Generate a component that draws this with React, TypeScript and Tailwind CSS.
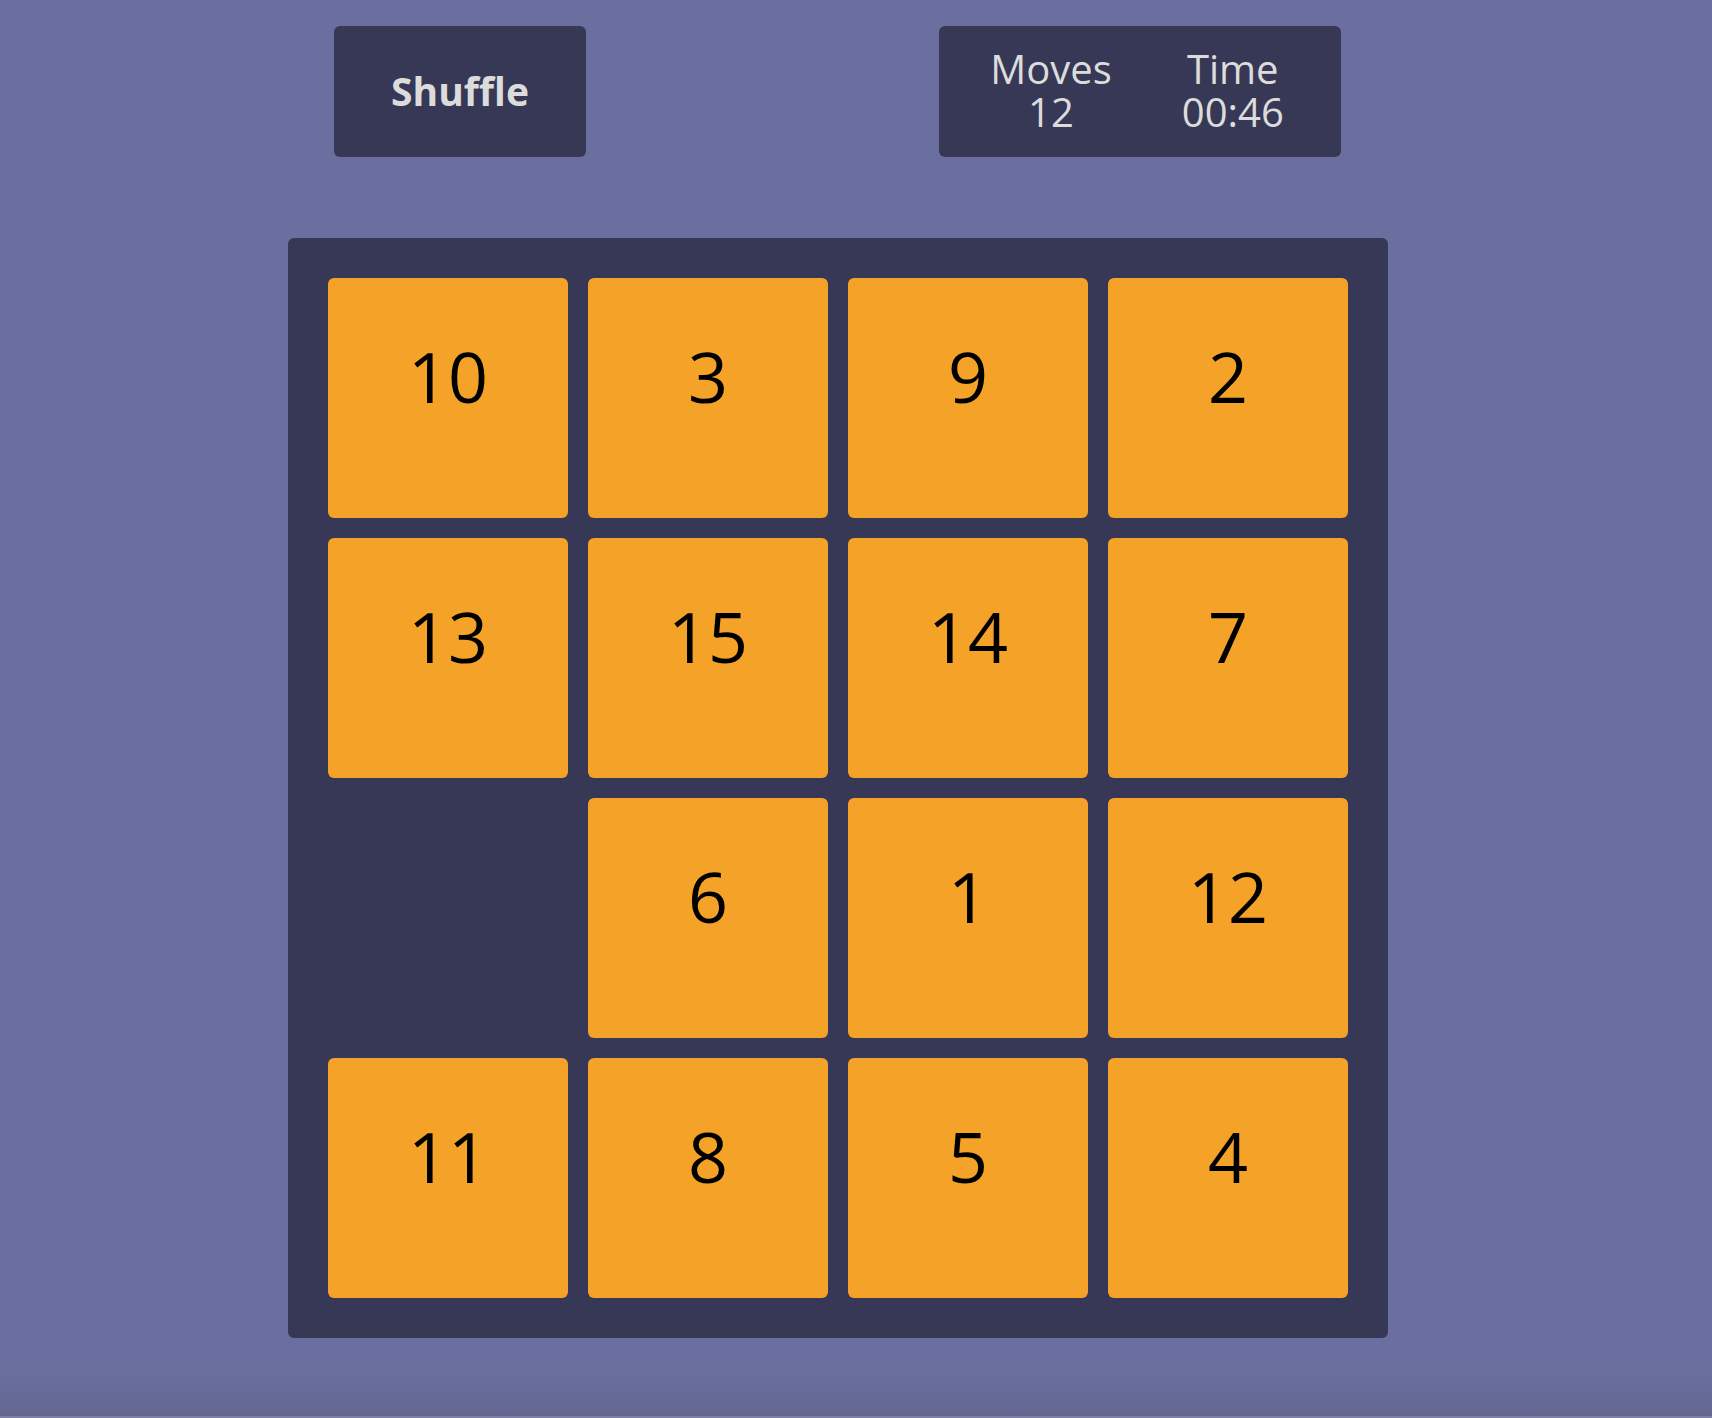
import React from "react";

const tiles: (number | null)[] = [10, 3, 9, 2, 13, 15, 14, 7, null, 6, 1, 12, 11, 8, 5, 4];

export default function App() {
  return (
    <div
      className="flex h-[1418px] w-full flex-col bg-[#6b6f9f] text-[#dcdcdc]"
      style={{ fontFamily: '"Open Sans", "DejaVu Sans", sans-serif' }}
    >
      <div className="ml-[288px] flex w-[1100px] flex-col pt-[26px]">
        <div className="flex items-start justify-between pl-[46px] pr-[47px]">
          <div className="flex h-[131px] w-[252px] cursor-pointer items-center justify-center rounded-[6px] bg-[#373856] pb-[2px] text-[39px] font-bold leading-[43px] text-[#dcdcdc]">
            Shuffle
          </div>
          <div className="flex h-[131px] w-[402px] justify-center gap-[70px] rounded-[6px] bg-[#373856] pr-[6px] pt-[21px] text-[40px] leading-[43px]">
            <div className="flex flex-col items-center">
              <span>Moves</span>
              <span>12</span>
            </div>
            <div className="flex flex-col items-center">
              <span>Time</span>
              <span>00:46</span>
            </div>
          </div>
        </div>
        <div className="mt-[81px] grid grid-cols-4 gap-[20px] rounded-[6px] bg-[#373856] p-[40px]">
          {tiles.map((t, i) =>
            t === null ? (
              <div key={i} className="h-[240px] w-[240px]" />
            ) : (
              <div
                key={i}
                className="flex h-[240px] w-[240px] justify-center rounded-[6px] bg-[#f5a229] pt-[63px] text-[70px] leading-[70px] text-black"
              >
                {t}
              </div>
            )
          )}
        </div>
      </div>
      <div className="flex-1 bg-gradient-to-b from-[#6b6f9f] from-40% to-[#62668f]" />
      <div className="h-[2px] bg-[#7d80a6]" />
    </div>
  );
}
